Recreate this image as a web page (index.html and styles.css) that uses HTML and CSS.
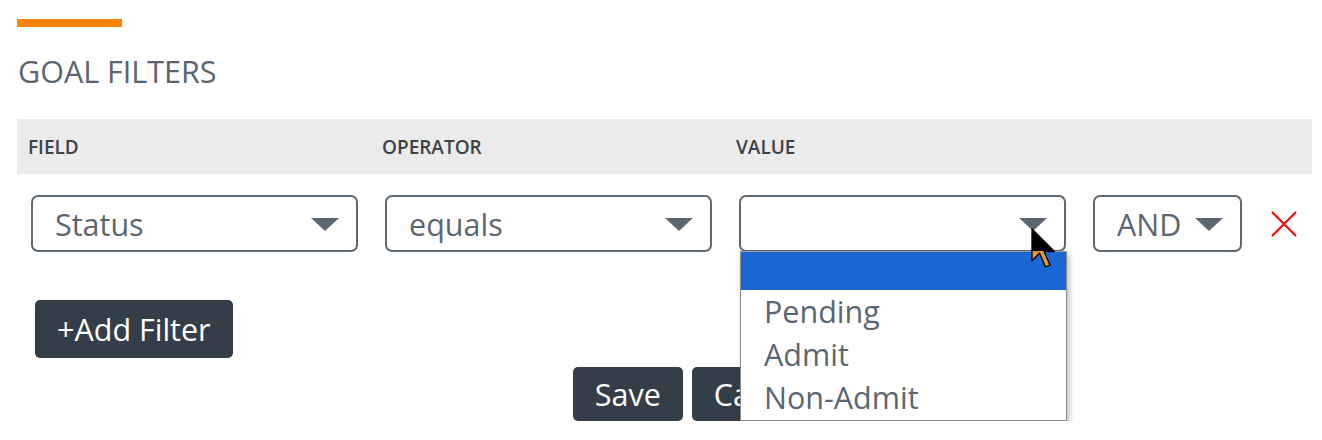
FILE: index.html
```html
<!DOCTYPE html>
<html lang="en">

<head>
  <meta charset="UTF-8" />
  <meta name="viewport" content="width=device-width, initial-scale=1.0" />
  <title>Goal Filters</title>
  <link rel="stylesheet" href="styles.css">
</head>

<body>
  <div class="panel">
    <div class="accent"></div>
    <h2 class="panel-title">GOAL FILTERS</h2>

    <div class="filter-head">
      <span>FIELD</span>
      <span>OPERATOR</span>
      <span>VALUE</span>
      <span></span>
    </div>

    <div class="filter-row">
      <div class="cell">
        <div class="select">
          <span>Status</span>
          <i class="caret"></i>
        </div>
      </div>
      <div class="cell">
        <div class="select">
          <span>equals</span>
          <i class="caret"></i>
        </div>
      </div>
      <div class="cell">
        <div class="select-wrap">
          <div class="select">
            <span></span>
            <i class="caret"></i>
          </div>
          <!-- open value list -->
          <ul class="options">
            <li class="selected"></li>
            <li>Pending</li>
            <li>Admit</li>
            <li>Non-Admit</li>
          </ul>
          <svg class="cursor" width="26" height="42" viewBox="0 0 26 42">
            <defs>
              <linearGradient id="cursorFill" gradientUnits="userSpaceOnUse" x1="0" y1="0" x2="0" y2="42">
                <stop offset="0.55" stop-color="#000" />
                <stop offset="0.55" stop-color="#e5992d" />
              </linearGradient>
            </defs>
            <polygon points="1,1 1,33 8.5,25 14.5,39 19,37 13,23.5 23.5,23.5" fill="url(#cursorFill)" stroke="#000" stroke-width="1.3" stroke-linejoin="round" />
          </svg>
        </div>
      </div>
      <div class="cell cell-join">
        <div class="select select-small">
          <span>AND</span>
          <i class="caret"></i>
        </div>
        <svg class="remove" width="26" height="26" viewBox="0 0 26 26">
          <path d="M1 1 L25 25 M25 1 L1 25" stroke="#ff0000" stroke-width="2" fill="none" />
        </svg>
      </div>
    </div>

    <button class="btn btn-add">+Add Filter</button>

    <div class="actions">
      <button class="btn">Save</button>
      <button class="btn">Cancel</button>
    </div>
  </div>
</body>

</html>
```

FILE: styles.css
```css
* {
  box-sizing: border-box;
  margin: 0;
  padding: 0;
  font-family: 'Open Sans', 'Liberation Sans', sans-serif;
}

body {
  background-color: #fff;
  color: #5b6670;
}

.panel {
  padding: 19px 10px 0 17px;
}

.accent {
  width: 105px;
  height: 8px;
  background: #ff8300;
}

.panel-title {
  margin: 24px 0 28px 1px;
  font-size: 30.5px;
  font-weight: 400;
  line-height: 40px;
  color: #5a6570;
}

.filter-head,
.filter-row {
  display: grid;
  grid-template-columns: 354px 354px 354px 1fr;
}

.filter-head {
  height: 55px;
  align-items: center;
  background: #ebebeb;
}

.filter-head span {
  padding-left: 11px;
  font-size: 19px;
  font-weight: 600;
  color: #3e4349;
}

.filter-row {
  margin-top: 21px;
  align-items: center;
}

.cell {
  padding-left: 14px;
}

.cell-join {
  display: flex;
  align-items: center;
  gap: 29px;
}

.select-wrap {
  position: relative;
  width: 327px;
}

.select {
  display: flex;
  align-items: center;
  justify-content: space-between;
  width: 327px;
  height: 57px;
  padding: 0 17px 0 22px;
  border: 2px solid #5e6973;
  border-radius: 7px;
  font-size: 30.5px;
  color: #5b6670;
}

.select-small {
  width: 149px;
  justify-content: flex-start;
  gap: 14px;
}

.caret {
  width: 0;
  height: 0;
  margin-top: 2px;
  border-left: 14px solid transparent;
  border-right: 14px solid transparent;
  border-top: 13px solid #5b6670;
}

.remove {
  display: block;
}

.options {
  position: absolute;
  top: calc(100% - 1px);
  left: 1px;
  width: 327px;
  padding-bottom: 1px;
  list-style: none;
  background: #fff;
  border: 1px solid #8c8c8c;
  border-top-color: #9a9a9a;
  box-shadow: 2px 3px 6px rgba(0, 0, 0, 0.28);
  z-index: 2;
}

.options li {
  height: 43px;
  padding-left: 23px;
  font-size: 30.5px;
  line-height: 43px;
  color: #5b6670;
}

.options li.selected {
  height: 38px;
  background: #1a66d2;
}

.cursor {
  position: absolute;
  left: 292px;
  top: 33px;
  z-index: 3;
}

.btn {
  display: inline-flex;
  align-items: center;
  height: 58px;
  padding: 0 22px;
  border: none;
  border-radius: 5px;
  background: #343e48;
  color: #fff;
  font-size: 30.5px;
  cursor: pointer;
}

.btn-add {
  margin: 48px 0 0 18px;
}

.actions {
  display: flex;
  justify-content: center;
  gap: 9px;
  margin-top: 9px;
  padding-left: 74px;
}

.actions .btn {
  height: 54px;
}
```
